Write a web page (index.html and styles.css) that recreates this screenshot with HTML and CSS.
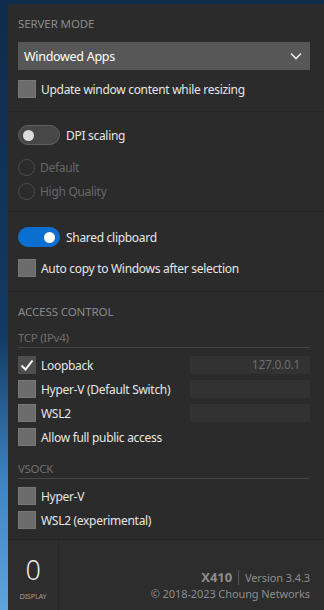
FILE: index.html
```html
<!DOCTYPE html>
<html lang="en">
<head>
    <meta charset="UTF-8">
    <meta name="viewport" content="width=device-width, initial-scale=1.0">
    <title>X410 Settings</title>
    <link rel="stylesheet" href="styles.css">
</head>
<body>
    <div class="panel">
        <section class="group group-server">
            <div class="heading">SERVER MODE</div>
            <div class="dropdown">
                <span>Windowed Apps</span>
                <svg class="chevron" width="12" height="8" viewBox="0 0 12 8"><path d="M1 1.5 L6 6.5 L11 1.5" fill="none" stroke="#e6e6e6" stroke-width="1.6"/></svg>
            </div>
            <label class="row check-row"><span class="box"></span>Update window content while resizing</label>
        </section>

        <section class="group group-dpi">
            <div class="row toggle-row"><span class="toggle"><span class="knob"></span></span>DPI scaling</div>
            <div class="row radio-row disabled"><span class="radio"></span>Default</div>
            <div class="row radio-row disabled"><span class="radio"></span>High Quality</div>
        </section>

        <section class="group group-clip">
            <div class="row toggle-row"><span class="toggle on"><span class="knob"></span></span>Shared clipboard</div>
            <label class="row check-row"><span class="box"></span>Auto copy to Windows after selection</label>
        </section>

        <section class="group group-access">
            <div class="heading">ACCESS CONTROL</div>
            <div class="subhead">TCP (IPv4)</div>
            <div class="list">
                <div class="row net-row">
                    <span class="row check-row"><span class="box checked"><svg width="18" height="18" viewBox="0 0 18 18"><path d="M3.5 9.5 L7.5 13.5 L14.5 4.5" fill="none" stroke="#ffffff" stroke-width="2"/></svg></span>Loopback</span>
                    <span class="addr">127.0.0.1</span>
                </div>
                <div class="row net-row">
                    <span class="row check-row"><span class="box"></span>Hyper-V (Default Switch)</span>
                    <span class="addr"></span>
                </div>
                <div class="row net-row">
                    <span class="row check-row"><span class="box"></span>WSL2</span>
                    <span class="addr"></span>
                </div>
                <label class="row check-row"><span class="box"></span>Allow full public access</label>
            </div>
            <div class="subhead sub-vsock">VSOCK</div>
            <div class="list">
                <label class="row check-row"><span class="box"></span>Hyper-V</label>
                <label class="row check-row"><span class="box"></span>WSL2 (experimental)</label>
            </div>
        </section>

        <footer class="footer">
            <div class="display">
                <div class="display-num">0</div>
                <div class="display-label">DISPLAY</div>
            </div>
            <div class="about">
                <div class="about-line"><span class="brand">X410</span><span class="sep"></span><span>Version 3.4.3</span></div>
                <div class="copy">© 2018-2023 Choung Networks</div>
            </div>
        </footer>
    </div>
</body>
</html>
```

FILE: styles.css
```css
html, body {
    margin: 0;
    height: 100%;
}
body {
    font-family: "Segoe UI", "Noto Sans", sans-serif;
    background: linear-gradient(180deg, #0f2b4c 0%, #123a63 55%, #3f86c6 80%, #5fa3dc 100%);
    overflow: hidden;
}
.panel {
    margin: 4px 0 0 8px;
    height: 606px;
    background: #2b2b2b;
    color: #e6e6e6;
    font-size: 12px;
    letter-spacing: -0.3px;
    display: flex;
    flex-direction: column;
}
.group {
    padding: 0 14px 0 10px;
    border-bottom: 1px solid #252525;
    display: flex;
    flex-direction: column;
}
.group-server {
    padding-top: 12px;
    padding-bottom: 13px;
}
.group-dpi {
    padding-top: 13px;
    padding-bottom: 11px;
}
.group-clip {
    padding-top: 15px;
    padding-bottom: 14px;
}
.group-access {
    padding-top: 12px;
    padding-bottom: 10px;
}
.heading {
    color: #8a8a8a;
    font-size: 11.5px;
    line-height: 16px;
    letter-spacing: -0.1px;
}
.dropdown {
    margin-top: 10px;
    height: 28px;
    background: #575757;
    color: #ffffff;
    display: flex;
    align-items: center;
    justify-content: space-between;
    padding: 0 8px 0 6px;
    font-size: 12.5px;
}
.row {
    display: flex;
    align-items: center;
}
.check-row {
    height: 18px;
    gap: 5px;
}
.group-server .check-row {
    margin-top: 10px;
}
.box {
    width: 16px;
    height: 16px;
    background: #6c6c6c;
    border: 1px solid #777777;
    flex-shrink: 0;
    position: relative;
}
.box.checked {
    background: #4e4e4e;
    border-color: #4e4e4e;
}
.box svg {
    position: absolute;
    left: -1px;
    top: -1px;
}
.toggle-row {
    height: 20px;
    gap: 6px;
}
.toggle {
    height: 18px;
    border: 1px solid #5e5e5e;
    background: #474747;
    border-radius: 10px;
    display: flex;
    align-items: center;
    padding: 0 4px;
    box-sizing: content-box;
    width: 32px;
}
.toggle .knob {
    width: 11px;
    height: 11px;
    border-radius: 50%;
    background: #dcdcdc;
}
.toggle.on {
    background: #0b6fd2;
    border-color: #0b6fd2;
    justify-content: flex-end;
}
.toggle.on .knob {
    background: #ffffff;
}
.radio-row {
    height: 18px;
    gap: 5px;
    margin-top: 6px;
}
.group-dpi .toggle-row + .radio-row {
    margin-top: 13px;
}
.radio {
    width: 15px;
    height: 15px;
    border: 1.5px solid #4f4f4f;
    border-radius: 50%;
}
.disabled {
    color: #676767;
}
.group-clip .check-row {
    margin-top: 12px;
}
.subhead {
    margin-top: 9px;
    line-height: 18px;
    color: #6e6e6e;
    font-size: 11.5px;
    border-bottom: 1px solid #474747;
}
.sub-vsock {
    margin-top: 14px;
}
.list {
    margin-top: 8px;
    display: flex;
    flex-direction: column;
    gap: 6px;
}
.net-row {
    justify-content: space-between;
    height: 18px;
}
.addr {
    width: 110px;
    height: 18px;
    background: #323232;
    color: #6e6e6e;
    text-align: right;
    padding-right: 10px;
    line-height: 18px;
    font-size: 12px;
}
.footer {
    flex: 1;
    display: flex;
    background: #2d2d2d;
}
.display {
    width: 50px;
    border-right: 1px solid #272727;
    display: flex;
    flex-direction: column;
    align-items: center;
    padding-top: 15px;
}
.display-num {
    font-size: 27px;
    font-weight: 300;
    line-height: 30px;
    color: #e8e8e8;
}
.display-label {
    font-size: 7.5px;
    color: #9a9a9a;
    margin-top: 6px;
    letter-spacing: -0.3px;
}
.about {
    flex: 1;
    display: flex;
    flex-direction: column;
    align-items: flex-end;
    padding: 29px 14px 0 0;
    color: #8c8c8c;
    font-size: 11px;
    letter-spacing: -0.1px;
}
.about-line {
    display: flex;
    align-items: center;
    height: 16px;
}
.brand {
    font-weight: bold;
    font-size: 13px;
}
.sep {
    width: 1px;
    height: 15px;
    background: #555555;
    margin: 0 6px;
}
.copy {
    margin-top: 1px;
    line-height: 16px;
}
```
